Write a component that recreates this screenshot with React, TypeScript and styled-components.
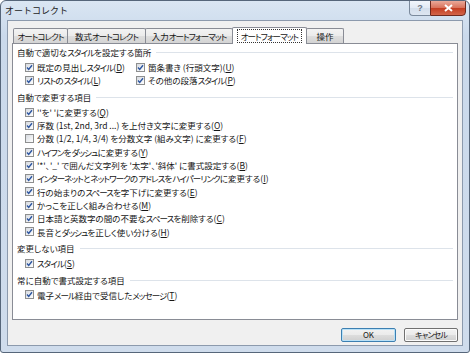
import React from 'react';
import styled, { createGlobalStyle } from 'styled-components';

const FONT = `'Noto Sans CJK JP', 'Noto Sans', sans-serif`;

const GlobalStyle = createGlobalStyle`
  html, body {
    margin: 0;
    padding: 0;
    background: #ffffff;
  }
  body {
    font-family: ${FONT};
    color: #161616;
  }
  * {
    box-sizing: border-box;
  }
`;

const Window = styled.div`
  width: 470px;
  height: 353px;
  display: flex;
  flex-direction: column;
  border: 1px solid #56667a;
  border-radius: 6px 6px 3px 3px;
  background: linear-gradient(180deg, #dae6f3 0%, #cad9eb 10%, #cfdcec 100%);
  overflow: hidden;
`;

const TitleBar = styled.div`
  height: 19px;
  flex: none;
  display: flex;
  align-items: flex-start;
  justify-content: space-between;
  padding: 0 3px 0 4px;
`;

const Title = styled.span`
  font-size: 9px;
  line-height: 19px;
  color: #1c1c1c;
`;

const CaptionButtons = styled.div`
  display: flex;
  margin-top: -1px;
`;

const HelpButton = styled.div`
  width: 21px;
  height: 16px;
  border: 1px solid #7b8a9c;
  border-right: none;
  border-radius: 0 0 0 4px;
  background: linear-gradient(180deg, #f2f6fb 0%, #e2eaf4 50%, #d3deeb 51%, #dde6f1 100%);
  display: flex;
  align-items: center;
  justify-content: center;
  font-family: 'Liberation Sans', sans-serif;
  font-size: 9px;
  font-weight: bold;
  color: #6d7785;
`;

const CloseButton = styled.div`
  width: 36px;
  height: 16px;
  border: 1px solid #6e2a1f;
  border-radius: 0 0 4px 0;
  background: linear-gradient(180deg, #eaa999 0%, #d9735c 48%, #c43e22 52%, #d2654a 100%);
  display: flex;
  align-items: center;
  justify-content: center;
`;

const Client = styled.div`
  flex: 1;
  margin: 0 6px 6px 6px;
  border: 1px solid #8c9aad;
  background: #f0f0f0;
  display: flex;
  flex-direction: column;
  padding: 6px 4px 0 4px;
`;

const TabRow = styled.div`
  height: 17px;
  flex: none;
  display: flex;
  align-items: flex-end;
  padding-left: 1px;
  margin-bottom: -1px;
  position: relative;
  z-index: 1;
`;

const Tab = styled.div<{ $width: number; $active?: boolean }>`
  width: ${p => p.$width}px;
  height: ${p => (p.$active ? 17 : 15)}px;
  margin-bottom: ${p => (p.$active ? 0 : 1)}px;
  margin-right: -1px;
  border: 1px solid #898c95;
  border-bottom: none;
  border-radius: 2px 2px 0 0;
  background: ${p =>
    p.$active
      ? '#ffffff'
      : 'linear-gradient(180deg, #f3f3f3 0%, #ebebeb 50%, #dedede 51%, #d4d4d4 100%)'};
  display: flex;
  align-items: center;
  justify-content: center;
  font-size: 8.5px;
  line-height: 1;
  font-feature-settings: 'palt';
  white-space: nowrap;
`;

const FocusText = styled.span`
  outline: 1px dotted #333;
  outline-offset: 1px;
  padding: 1px 2px;
`;

const Kana = styled.span`
  letter-spacing: -0.9px;
`;

const Panel = styled.div`
  height: 277px;
  flex: none;
  border: 1px solid #898c95;
  background: #ffffff;
  padding: 1.3px 4px 0 4px;
  display: flex;
  flex-direction: column;
`;

const Header = styled.div<{ $first?: boolean }>`
  height: 14px;
  flex: none;
  margin-top: ${p => (p.$first ? 0 : 3)}px;
  margin-bottom: 1.3px;
  display: flex;
  align-items: center;
  gap: 5px;
  font-size: 8.5px;
  line-height: 1;
  font-feature-settings: 'palt';
  white-space: nowrap;
`;

const Rule = styled.div`
  flex: 1;
  height: 1px;
  background: #dde3ea;
`;

const Grid = styled.div`
  display: grid;
  grid-template-columns: 111px 1fr;
  padding-left: 8px;
`;

const Row = styled.div<{ $indent?: boolean }>`
  height: 13.3px;
  display: flex;
  align-items: center;
  gap: 3px;
  padding-left: ${p => (p.$indent ? 8 : 0)}px;
`;

const Box = styled.span`
  width: 9px;
  height: 9px;
  flex: none;
  border: 1px solid #8e8f8f;
  background: linear-gradient(135deg, #d6dae0 0%, #eef0f2 60%, #ffffff 100%);
  display: flex;
  align-items: center;
  justify-content: center;
`;

const Label = styled.span`
  font-size: 8.5px;
  line-height: 1;
  font-feature-settings: 'palt';
  white-space: nowrap;
`;

const ButtonRow = styled.div`
  display: flex;
  justify-content: flex-end;
  gap: 8px;
  margin-top: 8px;
`;

const Button = styled.div<{ $width: number; $default?: boolean }>`
  width: ${p => p.$width}px;
  height: 14px;
  border: 1px solid ${p => (p.$default ? '#3c7fb1' : '#707070')};
  border-radius: 2px;
  background: linear-gradient(180deg, #f2f2f2 0%, #ebebeb 48%, #dddddd 52%, #cfcfcf 100%);
  box-shadow: ${p => (p.$default ? 'inset 0 0 0 1px #b9e1f7' : 'inset 0 0 0 1px #fbfbfb')};
  display: flex;
  align-items: center;
  justify-content: center;
  font-size: 8px;
  line-height: 1;
  font-feature-settings: 'palt';
`;

// katakana in the original UI font is much narrower than in Noto, so squeeze those runs
const jp = (text: string) =>
  text.split(/([\u30A0-\u30FF]+)/).map((part, i) =>
    i % 2 === 1 ? <Kana key={i}>{part}</Kana> : part
  );

const Check = ({ on }: { on: boolean }) => (
  <Box>
    {on && (
      <svg width="7" height="7" viewBox="0 0 7 7">
        <path d="M1 3.6 L2.7 5.4 L6 1.3" fill="none" stroke="#2c55a0" strokeWidth="1.4" />
      </svg>
    )}
  </Box>
);

const Item = ({ text, k, on = true }: { text: string; k: string; on?: boolean }) => (
  <>
    <Check on={on} />
    <Label>
      {jp(text)}(<u>{k}</u>)
    </Label>
  </>
);

const CHANGE_ITEMS: { text: string; k: string; on: boolean }[] = [
  { text: "''を' 'に変更する", k: 'Q', on: true },
  { text: '序数 (1st, 2nd, 3rd ...) を上付き文字に変更する', k: 'O', on: true },
  { text: '分数 (1/2, 1/4, 3/4) を分数文字 (組み文字) に変更する', k: 'F', on: false },
  { text: 'ハイフンをダッシュに変更する', k: 'Y', on: true },
  { text: "'*'、'_' で囲んだ文字列を '太字'、'斜体' に書式設定する", k: 'B', on: true },
  { text: 'インターネットとネットワークのアドレスをハイパーリンクに変更する', k: 'I', on: true },
  { text: '行の始まりのスペースを字下げに変更する', k: 'E', on: true },
  { text: 'かっこを正しく組み合わせる', k: 'M', on: true },
  { text: '日本語と英数字の間の不要なスペースを削除する', k: 'C', on: true },
  { text: '長音とダッシュを正しく使い分ける', k: 'H', on: true },
];

export default function App() {
  return (
    <>
      <GlobalStyle />
      <Window>
        <TitleBar>
          <Title>オートコレクト</Title>
          <CaptionButtons>
            <HelpButton>?</HelpButton>
            <CloseButton>
              <svg width="11" height="8" viewBox="0 0 11 8">
                <path d="M2 1 L9 7 M9 1 L2 7" stroke="#ffffff" strokeWidth="2" />
              </svg>
            </CloseButton>
          </CaptionButtons>
        </TitleBar>

        <Client>
          <TabRow>
            <Tab $width={55}>{jp('オートコレクト')}</Tab>
            <Tab $width={79}>{jp('数式オートコレクト')}</Tab>
            <Tab $width={88}>{jp('入力オートフォーマット')}</Tab>
            <Tab $width={75} $active>
              <FocusText>{jp('オートフォーマット')}</FocusText>
            </Tab>
            <Tab $width={38}>操作</Tab>
          </TabRow>

          <Panel>
            <Header $first>
              <span>{jp('自動で適切なスタイルを設定する箇所')}</span>
              <Rule />
            </Header>
            <Grid>
              <Row>
                <Item text="既定の見出しスタイル" k="D" />
              </Row>
              <Row>
                <Item text="箇条書き (行頭文字)" k="U" />
              </Row>
              <Row>
                <Item text="リストのスタイル" k="L" />
              </Row>
              <Row>
                <Item text="その他の段落スタイル" k="P" />
              </Row>
            </Grid>

            <Header>
              <span>自動で変更する項目</span>
              <Rule />
            </Header>
            {CHANGE_ITEMS.map(item => (
              <Row key={item.k} $indent>
                <Item text={item.text} k={item.k} on={item.on} />
              </Row>
            ))}

            <Header>
              <span>変更しない項目</span>
              <Rule />
            </Header>
            <Row $indent>
              <Item text="スタイル" k="S" />
            </Row>

            <Header>
              <span>常に自動で書式設定する項目</span>
              <Rule />
            </Header>
            <Row $indent>
              <Item text="電子メール経由で受信したメッセージ" k="T" />
            </Row>
          </Panel>

          <ButtonRow>
            <Button $width={55} $default>OK</Button>
            <Button $width={54}>{jp('キャンセル')}</Button>
          </ButtonRow>
        </Client>
      </Window>
    </>
  );
}
